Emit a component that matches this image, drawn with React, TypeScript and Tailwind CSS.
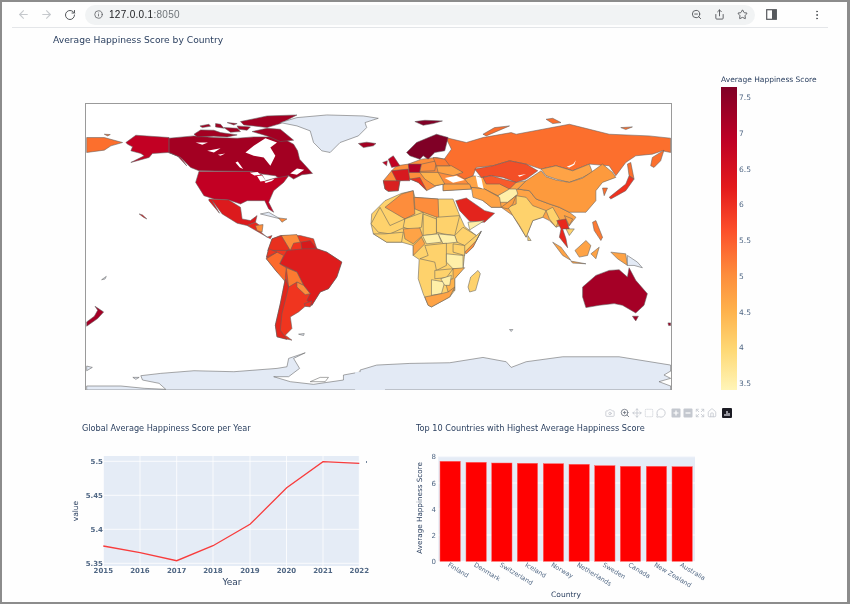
import {
  ArrowLeft,
  ArrowRight,
  Camera,
  EllipsisVertical,
  Expand,
  House,
  Info,
  MessageCircle,
  Move,
  RotateCw,
  Share,
  SquareDashed,
  Star,
  ZoomIn,
  ZoomOut,
} from "lucide-react";

type Shape = [string, string];

const DARK = "#a50026";
const DEEP = "#800026";
const CANADA = "#a30022";
const USA = "#c20023";
const ICE = "#e3eaf5";
const RUSSIA = "#fc6f2d";
const ORANGE = "#fd8d3c";
const AMBER = "#fea346";
const GOLD = "#fed26c";
const PALE = "#ffefa8";
const WATER = "#ffffff";
const OUTLINED = "#fffffe";

// north america, traced on a 3x crop that starts at 80,100
const america: Shape[] = [
  [RUSSIA, "M17 110 L70 110 L125 125 L90 135 L70 148 L17 155Z"],
  [RUSSIA, "M70 100 L88 101 L80 105Z"],
  [USA, "M135 125 L165 103 L265 110 L265 155 L300 170 L318 195 L290 165 L262 155 L215 158 L205 170 L150 185 L190 165 L180 158 L150 150 L155 138 L140 130Z"],
  [CANADA, "M265 112 L340 105 L400 110 L470 112 L520 108 L560 108 L600 108 L640 130 L652 150 L658 175 L685 205 L697 218 L665 222 L640 235 L625 225 L600 235 L585 225 L545 220 L510 212 L355 210 L330 200 L300 170 L265 155Z"],
  [WATER, "M495 155 L520 135 L555 112 L590 125 L570 140 L585 165 L570 195 L550 170 L520 165Z"],
  [CANADA, "M340 100 L360 87 L400 88 L420 95 L470 102 L440 108 L400 106 L350 108Z"],
  [CANADA, "M358 75 L385 70 L390 76 L365 80Z"],
  [CANADA, "M405 68 L420 70 L430 82 L405 78Z"],
  [CANADA, "M440 65 L470 68 L460 72Z"],
  [CANADA, "M430 80 L470 82 L480 92 L450 94Z"],
  [CANADA, "M480 62 L560 45 L650 42 L600 68 L560 80 L520 75 L490 72Z"],
  [CANADA, "M470 75 L510 78 L500 88 L475 85Z"],
  [CANADA, "M515 92 L560 82 L600 85 L640 118 L600 122 L560 105Z"],
  [WATER, "M345 125 L382 125 L365 132Z"],
  [WATER, "M380 150 L420 142 L400 155Z"],
  [WATER, "M412 162 L434 158 L420 165Z"],
  [WATER, "M465 185 L472 182 L488 205 L478 200Z"],
  [WATER, "M630 218 L650 203 L672 207 L650 222Z"],
  [USA, "M355 212 L510 212 L545 222 L555 240 L585 232 L625 225 L610 245 L580 270 L565 305 L580 335 L565 325 L553 300 L500 300 L480 310 L445 298 L400 295 L370 285 L345 245Z"],
  [WATER, "M508 216 L532 214 L540 222 L522 224Z"],
  [WATER, "M530 226 L545 224 L556 240 L540 242Z"],
  [WATER, "M552 243 L582 234 L575 241 L556 247Z"],
  ["#dc1a1d", "M385 295 L445 298 L480 320 L485 355 L510 360 L530 345 L525 365 L500 375 L470 368 L425 340 L395 300 L417 338 L385 300Z"],
  ["#e8281c", "M500 375 L525 365 L545 380 L530 385 L560 410 L575 405 L570 415 L535 395Z"],
  [ORANGE, "M525 375 L548 372 L545 395 L530 390Z"],
  [ICE, "M540 340 L565 335 L600 355 L560 345Z"],
  [ORANGE, "M595 352 L620 355 L605 365Z"],
  [ICE, "M600 65 L650 50 L740 42 L850 45 L895 52 L855 65 L860 80 L835 105 L780 125 L750 155 L725 150 L700 125 L690 90 L650 75Z"],
  [CANADA, "M835 128 L860 124 L888 128 L880 135 L850 140Z"],
  ["#d7191c", "M175 340 L185 343 L198 355 L188 350Z"],
];

// south america, crop at 80,240
const south: Shape[] = [
  ["#f0351f", "M558 55 L565 25 L575 -5 L600 -15 L660 -15 L700 -5 L710 25 L740 35 L785 65 L770 110 L745 145 L720 155 L695 195 L675 198 L655 215 L630 230 L635 265 L615 285 L635 300 L590 290 L585 255 L600 190 L615 115 L590 95Z"],
  ["#e8301f", "M562 30 L575 -5 L605 -15 L630 25 L620 30Z"],
  [ORANGE, "M603 -15 L650 -18 L660 5 L640 8 L630 30Z"],
  ["#d7191c", "M662 5 L690 0 L710 25 L665 28Z"],
  ["#de1c1c", "M598 70 L620 30 L670 25 L710 25 L740 35 L785 65 L770 110 L745 145 L720 155 L695 195 L680 180 L690 160 L670 135 L650 95 L620 80Z"],
  ["#fc6a2c", "M558 55 L590 35 L610 45 L598 70 L618 82 L615 110 L620 130 L590 95Z"],
  ["#f0361f", "M558 50 L565 25 L590 35Z"],
  ["#fc7a30", "M618 82 L650 95 L670 135 L650 125 L625 140Z"],
  [ORANGE, "M650 125 L670 135 L690 160 L675 163 L650 140Z"],
  ["#e3261c", "M615 115 L625 140 L605 220 L600 270 L620 298 L590 290 L585 255 L600 190Z"],
  ["#ee2f1e", "M672 190 L695 182 L690 200 L675 198Z"],
  [ICE, "M655 282 L672 280 L670 286Z"],
  [ICE, "M62 118 L76 108 L72 116Z"],
  [DARK, "M17 245 L40 228 L50 210 L42 198 L68 215 L50 235 L17 258Z"],
  [ICE, "M17 438 L120 438 L190 445 L255 448 L235 430 L185 420 L180 407 L240 400 L340 392 L460 395 L590 385 L620 380 L625 355 L675 338 L640 355 L658 385 L625 410 L580 410 L630 425 L700 433 L790 420 L790 405 L900 385 L900 450 L17 450Z"],
  [ICE, "M17 378 L34 382 L17 392Z"],
  [ICE, "M156 412 L175 412 L165 418Z"],
  [OUTLINED, "M690 425 L720 412 L745 412 L735 425Z"],
];

// eurasia, crop at 370,100
const eurasia: Shape[] = [
  [ORANGE, "M40 240 L65 210 L80 195 L115 190 L155 175 L200 170 L225 175 L250 215 L285 225 L300 250 L305 265 L220 270 L220 250 L200 255 L170 270 L145 245 L120 235 L90 240 L85 270 L55 272 L45 265Z"],
  [AMBER, "M305 260 L345 250 L385 255 L445 265 L480 270 L500 295 L540 310 L570 320 L600 335 L620 350 L600 375 L585 370 L560 380 L540 360 L520 350 L490 360 L470 410 L430 345 L395 320 L365 320 L340 300Z"],
  [AMBER, "M285 235 L310 225 L340 230 L440 245 L470 240 L445 265 L385 285 L345 265 L305 260Z"],
  [RUSSIA, "M228 110 L290 125 L340 110 L425 95 L440 100 L520 85 L600 70 L640 80 L720 100 L840 105 L905 112 L905 155 L880 150 L850 160 L800 165 L770 185 L740 225 L720 195 L660 190 L610 210 L560 195 L515 205 L470 190 L420 180 L370 195 L320 200 L310 225 L285 235 L250 215 L220 180 L245 145Z"],
  [RUSSIA, "M340 100 L375 80 L420 75 L385 90 L350 105Z"],
  [RUSSIA, "M530 55 L550 52 L575 65 L550 68Z"],
  [RUSSIA, "M755 80 L790 78 L770 86Z"],
  [RUSSIA, "M845 195 L850 170 L885 148 L875 180 L855 200Z"],
  [RUSSIA, "M775 190 L785 185 L795 235 L780 225Z"],
  [WATER, "M592 198 L612 190 L620 178 L615 192 L600 200Z"],
  ["#f34f27", "M315 205 L370 195 L420 180 L470 190 L505 210 L470 235 L440 245 L400 230 L365 225 L335 230Z"],
  [WATER, "M445 224 L470 220 L450 228Z"],
  ["#f85a2c", "M340 230 L365 225 L400 235 L440 245 L420 265 L390 250 L350 250Z"],
  [AMBER, "M515 205 L560 195 L610 210 L660 190 L670 215 L640 230 L600 245 L560 235 L530 225Z"],
  ["#fd9a3d", "M470 240 L515 210 L530 228 L560 238 L600 245 L640 232 L665 215 L700 190 L730 215 L740 230 L700 245 L680 270 L680 300 L650 335 L600 335 L570 320 L540 310 L500 295 L480 270 L445 265Z"],
  [GOLD, "M440 285 L470 290 L490 315 L530 330 L520 350 L490 360 L470 410 L450 375 L430 345 L415 320 L440 310Z"],
  [PALE, "M385 285 L420 265 L440 265 L445 280 L415 305 L390 305Z"],
  [AMBER, "M305 260 L345 265 L390 290 L395 320 L365 320 L340 300 L310 290Z"],
  ["#fd9f41", "M395 320 L415 305 L440 285 L430 310 L415 325Z"],
  [AMBER, "M220 250 L300 250 L305 265 L220 270Z"],
  [WATER, "M225 232 L260 225 L285 238 L250 246Z"],
  [WATER, "M318 225 L335 232 L342 265 L325 258Z"],
  [DEEP, "M110 155 L140 125 L200 100 L235 110 L225 150 L195 155 L175 175 L160 165 L150 175 L120 165Z"],
  [DEEP, "M135 62 L165 58 L218 60 L190 68 L160 73Z"],
  ["#d92120", "M40 240 L90 240 L85 270 L55 272 L45 265Z"],
  ["#d7191f", "M65 210 L115 205 L120 240 L80 240Z"],
  ["#b10026", "M115 190 L155 190 L150 215 L118 215Z"],
  [USA, "M55 175 L70 165 L90 195 L65 200Z"],
  [USA, "M38 185 L52 180 L50 195Z"],
  ["#e8301f", "M120 235 L150 230 L170 268 L145 245Z"],
  [ORANGE, "M155 190 L200 180 L195 210 L150 212Z"],
  [AMBER, "M200 195 L245 195 L280 215 L250 225 L205 215Z"],
  ["#fc7b32", "M190 170 L225 175 L240 195 L200 195Z"],
  ["#feb24c", "M150 215 L205 215 L225 250 L195 255 L165 235Z"],
  ["#f0321f", "M720 290 L770 250 L780 225 L795 235 L770 270 L725 295Z"],
  [RUSSIA, "M700 262 L715 262 L705 285Z"],
];

// africa, south asia and oceania, crop at 370,190
const southEast: Shape[] = [
  [GOLD, "M3 100 L5 70 L45 30 L95 8 L130 0 L135 20 L205 25 L250 25 L270 75 L285 108 L320 135 L335 122 L310 170 L285 190 L280 235 L255 265 L255 300 L240 320 L185 350 L175 345 L160 310 L145 265 L148 207 L130 195 L130 165 L95 155 L50 155 L10 130Z"],
  [ORANGE, "M45 50 L95 10 L130 0 L135 70 L105 85Z"],
  [ORANGE, "M133 20 L205 25 L207 82 L160 65 L135 55Z"],
  ["#e3241d", "M258 30 L290 22 L345 60 L375 68 L345 95 L300 92 L270 60Z"],
  [PALE, "M295 95 L345 90 L300 118Z"],
  [GOLD, "M3 100 L30 50 L60 105 L105 85 L105 110 L60 130 L25 125Z"],
  [GOLD, "M105 85 L160 65 L155 110 L130 120 L100 110Z"],
  [GOLD, "M160 70 L200 85 L200 130 L160 135Z"],
  [GOLD, "M200 80 L270 75 L255 135 L220 130 L200 125Z"],
  [GOLD, "M255 135 L280 110 L320 135 L285 165 L262 155Z"],
  [ORANGE, "M285 185 L320 150 L335 122 L310 170 L290 190Z"],
  [PALE, "M205 130 L255 135 L262 155 L220 160Z"],
  [PALE, "M158 135 L205 130 L215 155 L170 160Z"],
  [AMBER, "M100 115 L150 112 L158 135 L130 160 L105 145Z"],
  [GOLD, "M10 130 L45 130 L100 125 L95 155 L50 155Z"],
  [AMBER, "M130 165 L155 140 L165 160 L130 195Z"],
  [GOLD, "M165 165 L230 158 L230 225 L200 240 L195 215 L150 205 L175 195Z"],
  [PALE, "M230 190 L280 195 L280 235 L250 235 L230 215Z"],
  [GOLD, "M250 160 L285 165 L285 195 L250 185Z"],
  [GOLD, "M195 240 L250 235 L230 262 L195 265Z"],
  [PALE, "M185 268 L225 275 L215 310 L185 315Z"],
  ["#feb24c", "M250 235 L285 232 L255 265 L255 300 L235 305 L225 270 L250 265Z"],
  [PALE, "M213 265 L245 255 L240 285 L225 285Z"],
  [AMBER, "M165 320 L190 315 L215 310 L235 305 L255 290 L240 320 L185 350 L175 345Z"],
  [GOLD, "M295 290 L303 260 L325 240 L332 250 L318 300 L300 305Z"],
  [AMBER, "M550 155 L575 170 L605 210 L580 195Z"],
  [AMBER, "M605 212 L650 220 L610 218Z"],
  [AMBER, "M617 180 L650 150 L665 165 L655 195 L630 200Z"],
  [AMBER, "M665 190 L690 170 L680 205Z"],
  [AMBER, "M725 185 L770 190 L775 225 L745 205Z"],
  [ICE, "M775 195 L805 215 L820 232 L795 225 L775 225Z"],
  ["#fc7a33", "M670 95 L680 90 L700 140 L695 150 L675 120Z"],
  [DARK, "M640 290 L680 255 L720 240 L750 238 L775 260 L780 232 L800 270 L835 310 L825 345 L800 368 L760 345 L735 340 L690 345 L650 352 L640 320Z"],
  [DARK, "M790 378 L808 378 L800 392Z"],
  [DARK, "M897 398 L905 398 L905 406 L899 406Z"],
  [ICE, "M420 418 L430 418 L425 424Z"],
  [ICE, "M-30 540 L20 525 L120 520 L240 518 L340 502 L410 515 L425 532 L470 515 L580 500 L750 500 L905 525 L905 600 L-30 600Z"],
  [OUTLINED, "M910 540 L885 555 L905 565 L870 575 L910 590Z"],
];

// drawn over the first layers, the islands and countries of south east asia
const indochina: Shape[] = [
  [GOLD, "M530 60 L550 50 L570 85 L560 110 L540 85Z"],
  ["#e8281c", "M562 90 L590 85 L600 115 L580 115 L590 145 L595 172 L570 140 L575 115Z"],
  [AMBER, "M585 75 L610 85 L600 105Z"],
  [GOLD, "M590 115 L615 115 L600 135Z"],
  [GOLD, "M475 135 L485 150 L475 150Z"],
];

const years = ["2015", "2016", "2017", "2018", "2019", "2020", "2021", "2022"];
const yearX = [103.3, 140, 176.7, 213, 250, 286.5, 323, 359.3];
const valueY: [string, number][] = [
  ["5.5", 460.3],
  ["5.45", 494.3],
  ["5.4", 528.3],
  ["5.35", 562.3],
];

const bars: [string, number, number][] = [
  ["Finland", 440, 460.3],
  ["Denmark", 466, 461.3],
  ["Switzerland", 491.7, 462],
  ["Iceland", 517.3, 462.3],
  ["Norway", 543.3, 462.7],
  ["Netherlands", 569, 463.3],
  ["Sweden", 594.7, 464.7],
  ["Canada", 620.3, 465.3],
  ["New Zealand", 646.3, 465.3],
  ["Australia", 672, 465.7],
];

const barTicks: [string, number][] = [
  ["8", 455.7],
  ["6", 482],
  ["4", 508],
  ["2", 534],
  ["0", 560.3],
];

const scaleTicks = ["7.5", "7", "6.5", "6", "5.5", "5", "4.5", "4", "3.5"];

function Land({ shapes, x, y }: { shapes: Shape[]; x: number; y: number }) {
  return (
    <g transform={`translate(${x} ${y}) scale(0.3333)`}>
      {shapes.map(([fill, d], i) => (
        <path
          key={i}
          d={d}
          fill={fill}
          stroke={fill === WATER ? "none" : "#5f5f5f"}
          strokeWidth={0.55}
          strokeLinejoin="round"
          vectorEffect="non-scaling-stroke"
        />
      ))}
    </g>
  );
}

function WorldMap() {
  return (
    <svg viewBox="85 103 587 287" className="w-[587px] h-[287px] border-x border-t border-[#9a9a9a] bg-white shrink-0">
      <Land shapes={south} x={80} y={240} />
      <Land shapes={america} x={80} y={100} />
      <Land shapes={southEast} x={370} y={190} />
      <Land shapes={eurasia} x={370} y={100} />
      <Land shapes={indochina} x={370} y={190} />
      <rect x="355" y="372" width="30" height="18" fill={ICE} />
    </svg>
  );
}

function LineChart() {
  const points = "103.3,545 140,551.7 176.7,559.7 213,544.7 250,523.3 286.7,486.7 323,460.7 359.3,462.3";
  return (
    <svg viewBox="68 440 304 160" className="w-[304px] h-[160px] block" fontFamily="'DejaVu Sans', sans-serif">
      <rect x="103.3" y="455" width="256" height="110" fill="#e5ecf6" />
      {yearX.map((x) => (
        <line key={x} x1={x} x2={x} y1="455" y2="565" stroke="#fff" strokeWidth="0.8" />
      ))}
      {valueY.map(([label, y]) => (
        <g key={label}>
          <line x1="103.3" x2="359.3" y1={y} y2={y} stroke="#fff" strokeWidth="0.8" />
          <text x="103" y={y + 2.5} textAnchor="end" fontSize="7" fontWeight="600" fill="#506784">
            {label}
          </text>
        </g>
      ))}
      {years.map((year, i) => (
        <text key={year} x={yearX[i]} y="572" textAnchor="middle" fontSize="7" fontWeight="600" fill="#506784">
          {year}
        </text>
      ))}
      <polyline points={points} fill="none" stroke="#f83c3c" strokeWidth="1.3" />
      <rect x="366" y="460" width="0.8" height="2" fill="#506784" />
      <text x="232" y="584" textAnchor="middle" fontSize="9" fill="#2a3f5f">
        Year
      </text>
      <text transform="translate(78 510) rotate(-90)" textAnchor="middle" fontSize="7.5" fill="#2a3f5f">
        value
      </text>
    </svg>
  );
}

function BarChart() {
  return (
    <svg viewBox="405 440 330 160" className="w-[330px] h-[160px] block" fontFamily="'DejaVu Sans', sans-serif">
      <rect x="438.3" y="455" width="256.7" height="105.3" fill="#e5ecf6" />
      {barTicks.map(([label, y]) => (
        <g key={label}>
          <line x1="438.3" x2="695" y1={y} y2={y} stroke="#fff" strokeWidth="0.8" />
          <text x="436" y={y + 2.5} textAnchor="end" fontSize="7" fill="#506784">
            {label}
          </text>
        </g>
      ))}
      {bars.map(([name, x, top]) => (
        <g key={name}>
          <rect x={x} y={top} width="20.3" height={560.3 - top} fill="#ff0000" stroke="#ff5f5f" strokeWidth="0.5" />
          <text transform={`translate(${x + 9} 562.5) rotate(31)`} y="3" fontSize="6.4" fill="#506784">
            {name}
          </text>
        </g>
      ))}
      <text x="566" y="595.5" textAnchor="middle" fontSize="7.5" fill="#2a3f5f">
        Country
      </text>
      <text transform="translate(422 507) rotate(-90)" textAnchor="middle" fontSize="7.2" fill="#2a3f5f">
        Average Happiness Score
      </text>
    </svg>
  );
}

function ModeBar() {
  const icon = "w-[10px] h-[10px] text-[#c4c8cf]";
  return (
    <div className="flex items-center justify-end gap-[2px] h-[12px] pr-[115px]">
      <Camera className={icon} />
      <ZoomIn className="w-[10px] h-[10px] ml-[3px] text-[#6e7480]" />
      <Move className={icon} />
      <SquareDashed className={icon} />
      <MessageCircle className={icon} />
      <svg viewBox="0 0 10 10" className="w-[10px] h-[10px] ml-[3px] text-[#c4c8cf]">
        <rect x="0.5" y="0.5" width="9" height="9" rx="1" fill="currentColor" />
        <path d="M2.5 5 H7.5 M5 2.5 V7.5" stroke="#fff" strokeWidth="1.2" />
      </svg>
      <svg viewBox="0 0 10 10" className="w-[10px] h-[10px] text-[#c4c8cf]">
        <rect x="0.5" y="0.5" width="9" height="9" rx="1" fill="currentColor" />
        <path d="M2.5 5 H7.5" stroke="#fff" strokeWidth="1.2" />
      </svg>
      <Expand className={icon} />
      <House className={icon} />
      <svg viewBox="0 0 10 10" className="w-[10px] h-[10px] ml-[3px]">
        <rect width="10" height="10" rx="1" fill="#1c1c24" />
        <path d="M3 8 V6 M5 8 V3 M7 8 V5" stroke="#e8e8f0" strokeWidth="1.2" />
      </svg>
    </div>
  );
}

export default function App() {
  return (
    <div className="w-[850px] h-[604px] overflow-hidden bg-[#fefefe] border-t-2 border-b-2 border-l-2 border-r-[3px] border-[#8c8c8c] blur-[0.35px] font-['DejaVu_Sans',sans-serif] text-[#2a3f5f]">
      {/* browser toolbar */}
      <div className="h-[26px] ml-[10px] mr-[19px] flex items-center border-b border-[#e4e6e9]">
        <ArrowLeft className="w-[13px] h-[13px] ml-[5px] text-[#c6c9cd]" />
        <ArrowRight className="w-[13px] h-[13px] ml-[10px] text-[#c6c9cd]" />
        <RotateCw className="w-[12px] h-[12px] ml-[11px] text-[#55585c]" />
        <div className="w-[670px] h-[20px] ml-[9px] rounded-full bg-[#f1f3f4] flex items-center pl-[9px] pr-[7px]">
          <Info className="w-[9px] h-[9px] text-[#55585c]" />
          <span className="ml-[6px] text-[10px] font-['Liberation_Sans',sans-serif] tracking-[0.3px] text-[#202124]">
            127.0.0.1<span className="text-[#70757a]">:8050</span>
          </span>
          <ZoomOut className="w-[11px] h-[11px] ml-auto text-[#55585c]" />
          <Share className="w-[11px] h-[11px] ml-[12px] text-[#55585c]" />
          <Star className="w-[11px] h-[11px] ml-[12px] text-[#55585c]" />
        </div>
        <svg viewBox="0 0 11 11" className="w-[11px] h-[11px] ml-[11px]">
          <rect x="0.7" y="0.7" width="9.6" height="9.6" fill="none" stroke="#55585c" strokeWidth="1.2" />
          <rect x="6" y="1" width="4.5" height="9" fill="#55585c" />
        </svg>
        <EllipsisVertical className="w-[12px] h-[12px] ml-[34px] text-[#55585c]" />
      </div>

      <h2 className="ml-[51px] mt-[6px] text-[9.17px] leading-[12px] font-normal">Average Happiness Score by Country</h2>

      {/* map and colour scale */}
      <div className="flex items-start mt-[28px] ml-[83px]">
        <div className="pt-[29px]">
          <WorldMap />
        </div>
        <div className="ml-[49px]">
          <div className="h-[13px] text-[7.5px] leading-[12px] whitespace-nowrap">Average Happiness Score</div>
          <div className="flex">
            <div className="w-[16px] h-[303px] bg-[linear-gradient(to_bottom,#800026,#bd0026_17%,#e31a1c_33%,#fc4e2a_47%,#fd8d3c_62%,#feb24c_74%,#fed976_87%,#fff5b8)]" />
            <div className="h-[303px] flex flex-col justify-between pt-[5px] pb-[1px] ml-[2px] text-[7.5px] leading-[11px] text-[#506784]">
              {scaleTicks.map((tick) => (
                <span key={tick}>{tick}</span>
              ))}
            </div>
          </div>
        </div>
      </div>

      <div className="mt-[17px]">
        <ModeBar />
      </div>

      {/* bottom charts */}
      <div className="flex mt-[3px] ml-[66px]">
        <div className="w-[337px]">
          <h3 className="ml-[14px] text-[8.16px] leading-[12px] font-normal">Global Average Happiness Score per Year</h3>
          <div className="mt-[7px]">
            <LineChart />
          </div>
        </div>
        <div>
          <h3 className="ml-[11px] text-[8.16px] leading-[12px] font-normal">
            Top 10 Countries with Highest Average Happiness Score
          </h3>
          <div className="mt-[7px]">
            <BarChart />
          </div>
        </div>
      </div>
    </div>
  );
}
